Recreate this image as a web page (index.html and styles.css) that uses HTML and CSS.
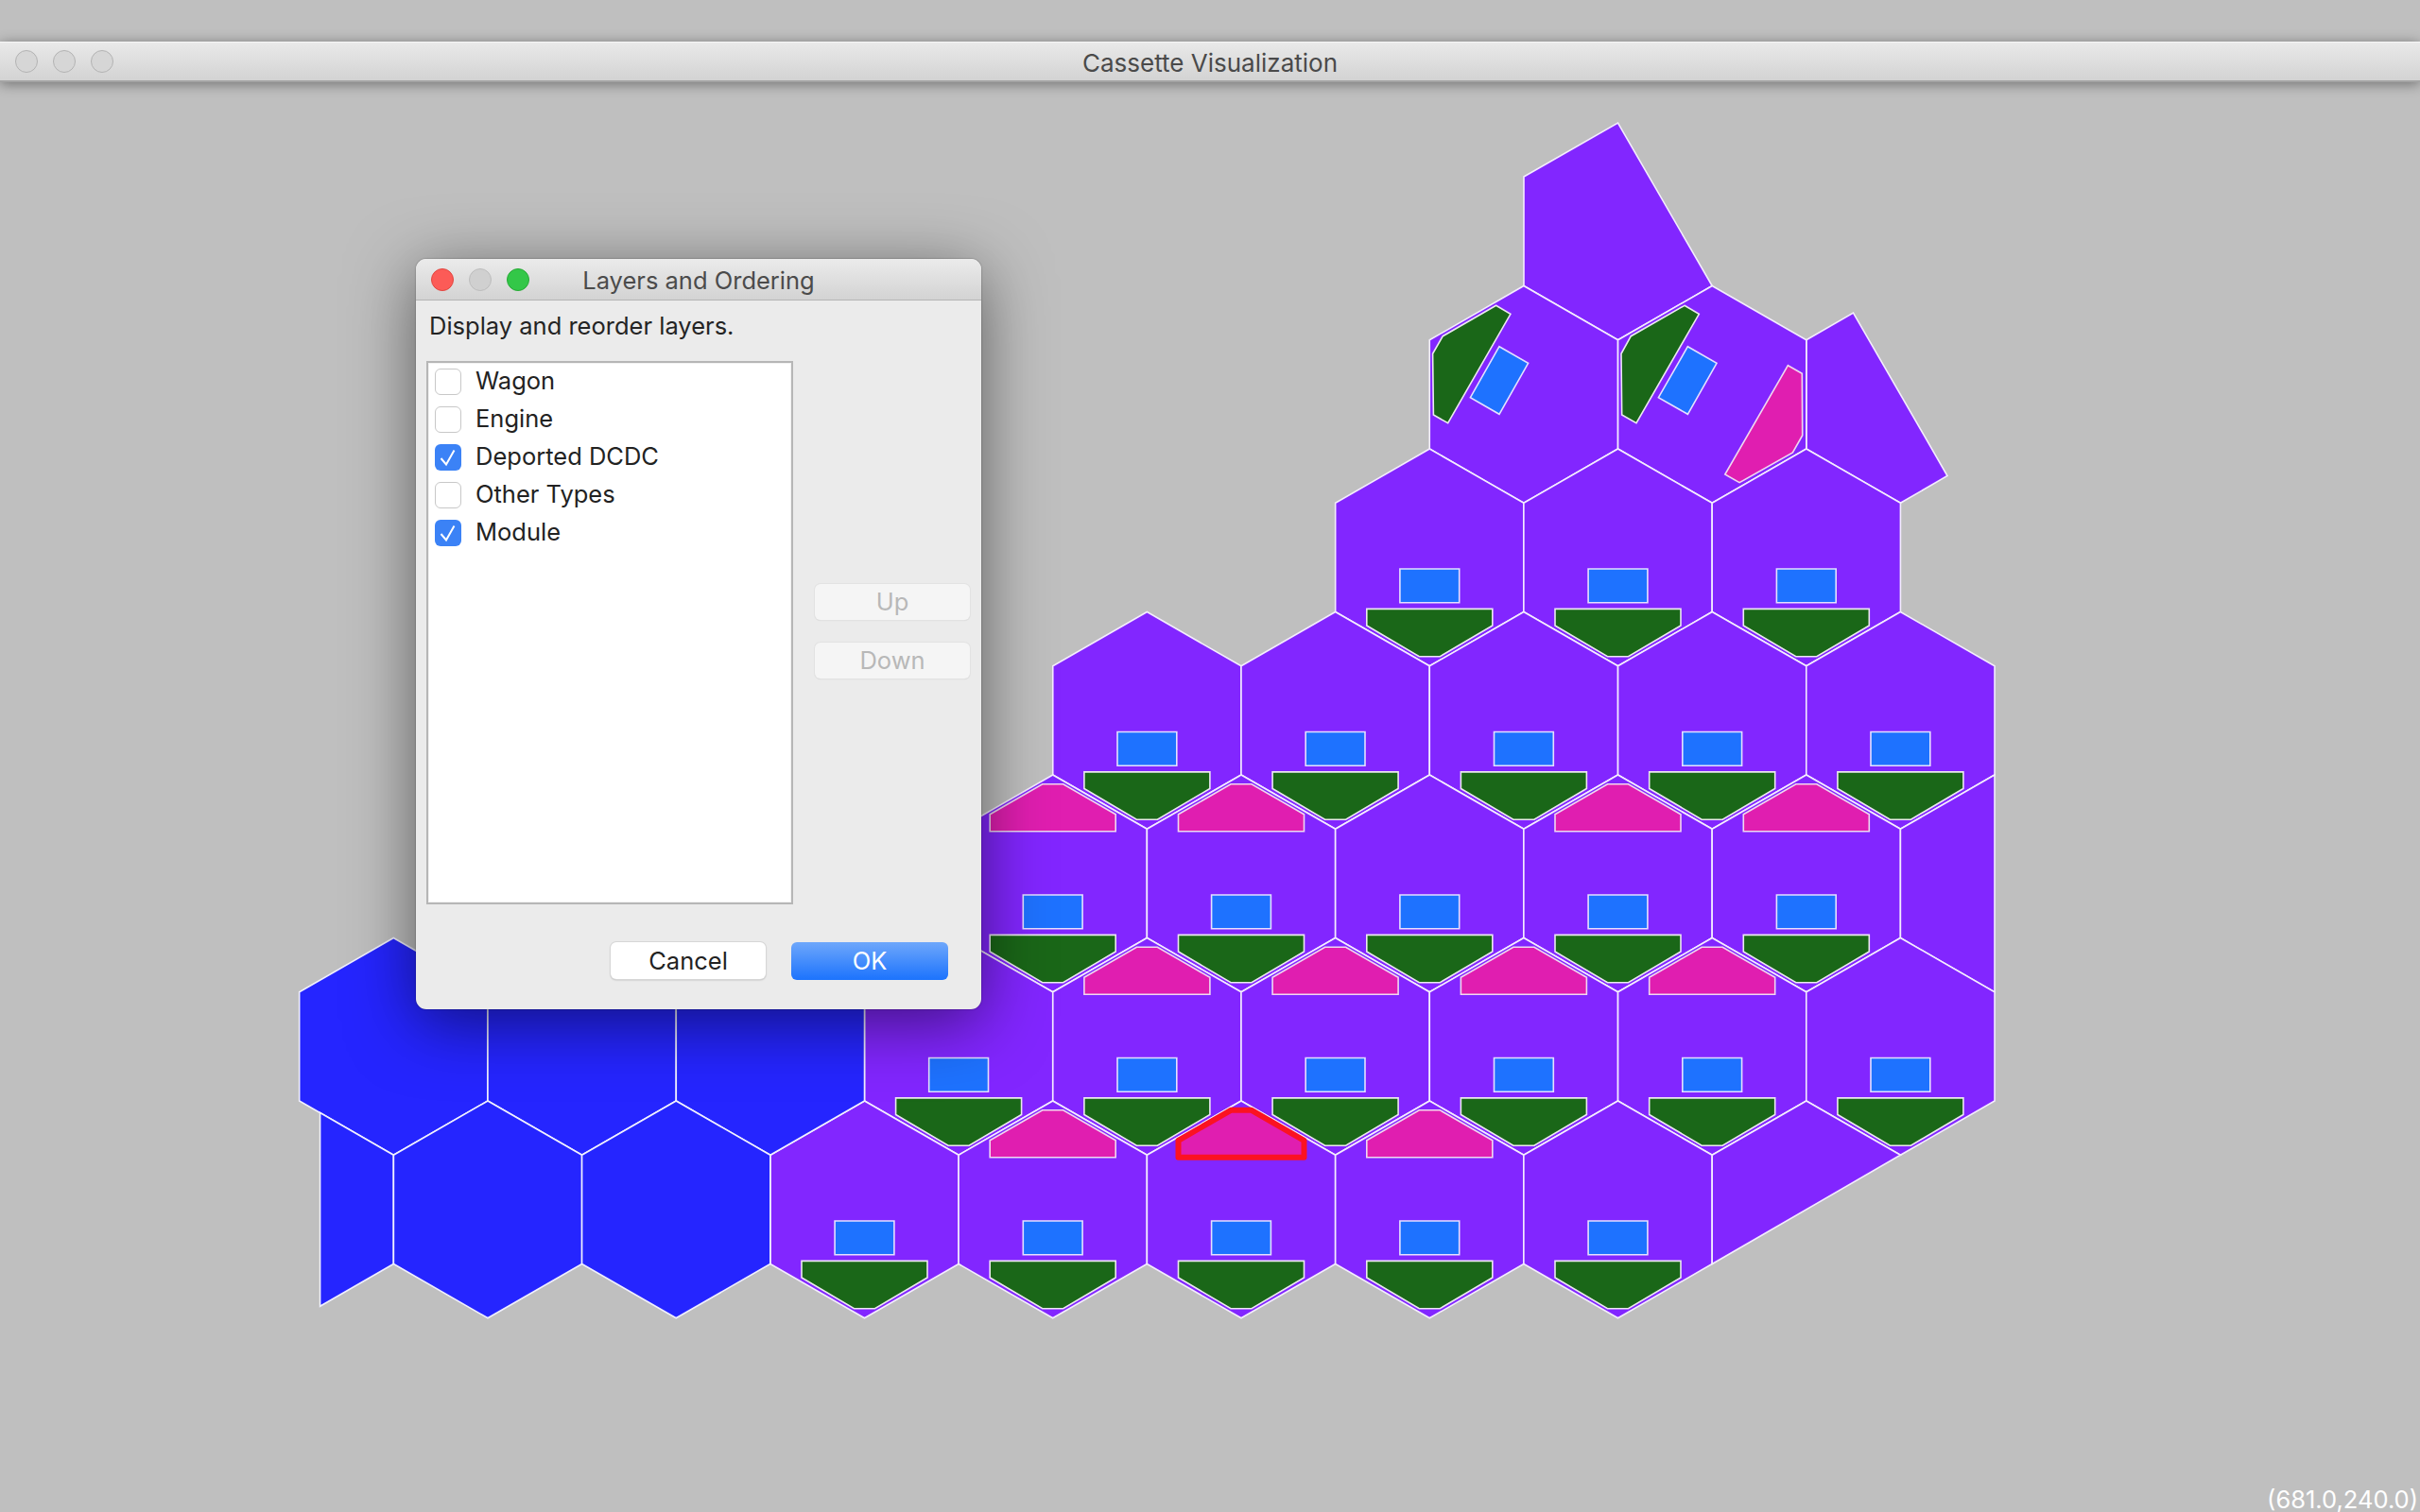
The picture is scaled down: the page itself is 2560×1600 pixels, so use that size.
FILE: index.html
```html
<!DOCTYPE html>
<html lang="en">
<head>
<meta charset="utf-8">
<title>Cassette Visualization</title>
<link rel="stylesheet" href="styles.css">
</head>
<body>
<div class="window">
  <header class="titlebar">
    <div class="lights">
      <span class="light"></span><span class="light"></span><span class="light"></span>
    </div>
    <div class="titlebar-text">Cassette Visualization</div>
    <div class="titlebar-spacer"></div>
  </header>
  <main class="canvas">
    <svg class="map" viewBox="0 87 2560 1513" width="2560" height="1513" aria-label="Cassette map">
      <defs>
        <polygon id="hex" points="0,0 99.63,57.3 99.63,172.5 0,229.8 -99.63,172.5 -99.63,57.3"/>
        <g id="bay">
          <polygon class="pack" points="-31.4,127 31.4,127 31.4,162.7 -31.4,162.7"/>
          <polygon class="green" points="-66.5,169.4 66.5,169.4 66.5,187 11,219.7 -11,219.7 -66.5,187"/>
        </g>
        <polygon id="mag" points="-11,9.8 11,9.8 66.5,41.8 66.5,59.8 -66.5,59.8 -66.5,41.8"/>
      </defs>

      <g class="cells-purple">
        <polygon points="1612,187 1711.5,130 1811.2,302.5 1711.5,359.8 1612,302.5"/>
        <polygon points="1910.8,359.8 1960.5,331 2060,503.5 2010.4,532.3 1910.8,475"/>
        <use href="#hex" x="1611.9" y="302.5"/><use href="#hex" x="1811.2" y="302.5"/>
        <use href="#hex" x="1512.3" y="475"/><use href="#hex" x="1711.5" y="475"/><use href="#hex" x="1910.8" y="475"/>
        <use href="#hex" x="1213.4" y="647.5"/><use href="#hex" x="1412.6" y="647.5"/><use href="#hex" x="1611.9" y="647.5"/><use href="#hex" x="1811.2" y="647.5"/><use href="#hex" x="2010.4" y="647.5"/>
        <use href="#hex" x="1113.7" y="820"/><use href="#hex" x="1313" y="820"/><use href="#hex" x="1512.3" y="820"/><use href="#hex" x="1711.5" y="820"/><use href="#hex" x="1910.8" y="820"/>
        <polygon points="2110,820 2110,1050 2010.4,992.5 2010.4,877.3"/>
        <use href="#hex" x="1014.1" y="992.5"/><use href="#hex" x="1213.4" y="992.5"/><use href="#hex" x="1412.6" y="992.5"/><use href="#hex" x="1611.9" y="992.5"/><use href="#hex" x="1811.2" y="992.5"/><use href="#hex" x="2010.4" y="992.5"/>
        <use href="#hex" x="914.5" y="1165"/><use href="#hex" x="1113.7" y="1165"/><use href="#hex" x="1313" y="1165"/><use href="#hex" x="1512.3" y="1165"/><use href="#hex" x="1711.5" y="1165"/>
        <polygon points="1910.8,1165 2010.4,1222.3 1811.2,1337.5 1811.2,1222.3"/>
      </g>
      <g class="cells-blue">
        <use href="#hex" x="416.3" y="992.5"/><use href="#hex" x="615.6" y="992.5"/><use href="#hex" x="814.9" y="992.5"/>
        <polygon points="338.6,1177.5 416.3,1222.3 416.3,1337.5 338.6,1382.3"/>
        <use href="#hex" x="516" y="1165"/><use href="#hex" x="715.2" y="1165"/>
      </g>

      <g class="bays">
        <use href="#bay" x="1512.3" y="475"/><use href="#bay" x="1711.5" y="475"/><use href="#bay" x="1910.8" y="475"/>
        <use href="#bay" x="1213.4" y="647.5"/><use href="#bay" x="1412.6" y="647.5"/><use href="#bay" x="1611.9" y="647.5"/><use href="#bay" x="1811.2" y="647.5"/><use href="#bay" x="2010.4" y="647.5"/>
        <use href="#bay" x="1113.7" y="820"/><use href="#bay" x="1313" y="820"/><use href="#bay" x="1512.3" y="820"/><use href="#bay" x="1711.5" y="820"/><use href="#bay" x="1910.8" y="820"/>
        <use href="#bay" x="1014.1" y="992.5"/><use href="#bay" x="1213.4" y="992.5"/><use href="#bay" x="1412.6" y="992.5"/><use href="#bay" x="1611.9" y="992.5"/><use href="#bay" x="1811.2" y="992.5"/><use href="#bay" x="2010.4" y="992.5"/>
        <use href="#bay" x="914.5" y="1165"/><use href="#bay" x="1113.7" y="1165"/><use href="#bay" x="1313" y="1165"/><use href="#bay" x="1512.3" y="1165"/><use href="#bay" x="1711.5" y="1165"/>
        <polygon class="green" points="1582.6,323.3 1597.9,332.3 1531.7,447.7 1516.4,439 1515.6,374.3 1526.3,355.7"/>
        <polygon class="pack" points="1586,366.7 1616.6,384.3 1586,438.3 1555.4,420.7"/>
        <polygon class="green" points="1782,323.3 1797.3,332.3 1731,447.7 1715.7,439 1715,374.3 1725.3,355.7"/>
        <polygon class="pack" points="1785.4,366.7 1816,384.3 1785.4,438.3 1754.4,420.7"/>
      </g>
      <g class="mags">
        <polygon points="1891.4,386.7 1906.3,395.3 1906.7,460.7 1896.4,479 1840.1,510.7 1824.8,502"/>
        <use href="#mag" x="1113.7" y="820"/><use href="#mag" x="1313" y="820"/><use href="#mag" x="1711.5" y="820"/><use href="#mag" x="1910.8" y="820"/>
        <use href="#mag" x="1213.4" y="992.5"/><use href="#mag" x="1412.6" y="992.5"/><use href="#mag" x="1611.9" y="992.5"/><use href="#mag" x="1811.2" y="992.5"/>
        <use href="#mag" x="1113.7" y="1165"/><use href="#mag" x="1512.3" y="1165"/>
        <use class="selected" href="#mag" x="1313" y="1165"/>
      </g>
    </svg>

    <div class="coords">(681.0,240.0)</div>

    <section class="dialog">
      <header class="dialog-title">
        <div class="dialog-lights">
          <span class="dot dot-red"></span><span class="dot dot-grey"></span><span class="dot dot-green"></span>
        </div>
        <div class="dialog-title-text">Layers and Ordering</div>
        <div></div>
      </header>
      <div class="dialog-body">
        <p class="prompt">Display and reorder layers.</p>
        <div class="dialog-main">
          <ul class="layers">
            <li class="layer"><span class="box"></span><span class="layer-name">Wagon</span></li>
            <li class="layer"><span class="box"></span><span class="layer-name">Engine</span></li>
            <li class="layer"><span class="box box-on"><svg class="tick" viewBox="0 0 28 28" width="28" height="28"><path d="M6.5 15 L12 21.5 L20.5 6.5"/></svg></span><span class="layer-name">Deported DCDC</span></li>
            <li class="layer"><span class="box"></span><span class="layer-name">Other Types</span></li>
            <li class="layer"><span class="box box-on"><svg class="tick" viewBox="0 0 28 28" width="28" height="28"><path d="M6.5 15 L12 21.5 L20.5 6.5"/></svg></span><span class="layer-name">Module</span></li>
          </ul>
          <div class="side-buttons">
            <button class="btn btn-off" type="button">Up</button>
            <button class="btn btn-off" type="button">Down</button>
          </div>
        </div>
        <div class="dialog-actions">
          <button class="btn btn-plain" type="button">Cancel</button>
          <button class="btn btn-primary" type="button">OK</button>
        </div>
      </div>
    </section>
  </main>
</div>
</body>
</html>
```
FILE: styles.css
```css
html, body {
  margin: 0;
  padding: 0;
}
body {
  width: 2560px;
  height: 1600px;
  overflow: hidden;
  background: #bfbfbf;
  font-family: Inter, "Noto Sans", "Liberation Sans", sans-serif;
  font-size: 25.5px;
}
.window {
  display: flex;
  flex-direction: column;
  height: 1600px;
  padding-top: 44px;
  box-sizing: border-box;
}
.titlebar {
  position: relative;
  z-index: 2;
  display: grid;
  grid-template-columns: 1fr auto 1fr;
  align-items: center;
  height: 43px;
  box-sizing: border-box;
  background: linear-gradient(#e9e9e9, #d3d3d3);
  border-top: 1px solid #f6f6f6;
  border-bottom: 2px solid #a4a4a4;
  box-shadow: 0 2px 14px rgba(0, 0, 0, 0.42);
}
.lights {
  display: flex;
  gap: 16px;
  padding-left: 16px;
}
.light {
  width: 24px;
  height: 24px;
  box-sizing: border-box;
  border-radius: 50%;
  border: 1.5px solid #b3b3b3;
  background: #d6d6d6;
}
.titlebar-text {
  color: #4a4a4a;
  font-size: 26px;
  padding-top: 2px;
}
.canvas {
  position: relative;
  flex: 1;
}
.map {
  display: block;
}
.cells-purple use, .cells-purple polygon {
  fill: #8226ff;
  stroke: #f4ecff;
  stroke-width: 1.6;
}
.cells-blue use, .cells-blue polygon {
  fill: #2525ff;
  stroke: #f0f0ff;
  stroke-width: 1.6;
}
.pack {
  fill: #1e72ff;
  stroke: #e4e0ff;
  stroke-width: 1.6;
}
.green {
  fill: #1a6718;
  stroke: #ece8f0;
  stroke-width: 1.6;
}
.mags use, .mags polygon {
  fill: #e01eb0;
  stroke: #f0d8f0;
  stroke-width: 1.6;
}
.mags .selected {
  stroke: #fb1222;
  stroke-width: 6;
  stroke-linejoin: round;
}
.coords {
  position: absolute;
  right: 2px;
  bottom: -3px;
  color: #fff;
  font-size: 25.5px;
  line-height: 32px;
}
.dialog {
  position: absolute;
  left: 440px;
  top: 187px;
  width: 598px;
  height: 794px;
  display: flex;
  flex-direction: column;
  border-radius: 11px;
  background: #ebebeb;
  box-shadow: 0 14px 70px rgba(0, 0, 0, 0.52), 0 0 2px rgba(0, 0, 0, 0.4);
}
.dialog-title {
  display: grid;
  grid-template-columns: 1fr auto 1fr;
  align-items: center;
  height: 44px;
  box-sizing: border-box;
  border-radius: 11px 11px 0 0;
  background: linear-gradient(#ebebeb, #d3d3d3);
  border-bottom: 1.5px solid #b4b4b4;
}
.dialog-lights {
  display: flex;
  gap: 16px;
  padding-left: 16px;
}
.dot {
  width: 24px;
  height: 24px;
  box-sizing: border-box;
  border-radius: 50%;
}
.dot-red { background: #fc5b57; border: 1px solid #e2463f; }
.dot-grey { background: #d0d0d0; border: 1px solid #bdbdbd; }
.dot-green { background: #33c748; border: 1px solid #27aa35; }
.dialog-title-text {
  color: #4b4b4b;
  font-size: 25.5px;
  padding-top: 2px;
}
.dialog-body {
  flex: 1;
  display: flex;
  flex-direction: column;
  padding: 0 12px 31px 11px;
  min-height: 0;
}
.prompt {
  margin: 0;
  height: 64px;
  padding: 11px 0 0 3px;
  box-sizing: border-box;
  color: #242424;
  line-height: 32px;
}
.dialog-main {
  display: flex;
  gap: 23px;
}
.layers {
  list-style: none;
  margin: 0;
  padding: 0 0 0 7px;
  width: 388px;
  height: 575px;
  box-sizing: border-box;
  background: #fff;
  border: 2px solid #b6b6b6;
  box-shadow: inset 0 0 0 1px #f2f2f2;
}
.layer {
  display: flex;
  align-items: center;
  gap: 15px;
  height: 40px;
  color: #222;
}
.layer-name {
  padding-bottom: 3px;
}
.box {
  width: 28px;
  height: 28px;
  box-sizing: border-box;
  border-radius: 6px;
  background: #fff;
  border: 1.5px solid #c8c8c8;
}
.box-on {
  background: #3b82f6;
  border: none;
}
.tick {
  display: block;
  fill: none;
  stroke: #fff;
  stroke-width: 2;
}
.side-buttons {
  flex: 1;
  display: flex;
  flex-direction: column;
  justify-content: center;
  gap: 24px;
  padding-bottom: 3px;
}
.btn {
  display: block;
  height: 38px;
  box-sizing: border-box;
  padding: 0;
  border: none;
  border-radius: 6px;
  font-family: inherit;
  font-size: 25.5px;
  line-height: 38px;
}
.btn-off {
  width: 100%;
  background: #f5f5f5;
  color: #b8b8b8;
  box-shadow: 0 0 0 1px #e2e2e2, 0 1px 1px rgba(0, 0, 0, 0.14);
}
.dialog-actions {
  margin-top: auto;
  display: flex;
  justify-content: flex-end;
  gap: 27px;
  padding-right: 23px;
}
.btn-plain {
  width: 164px;
  height: 39px;
  background: #fff;
  color: #222;
  box-shadow: 0 0 0 1px #d6d6d6, 0 1px 2px rgba(0, 0, 0, 0.3);
}
.btn-primary {
  width: 166px;
  height: 40px;
  background: linear-gradient(#6ea7fb, #1c73fd);
  color: #fff;
}
```
